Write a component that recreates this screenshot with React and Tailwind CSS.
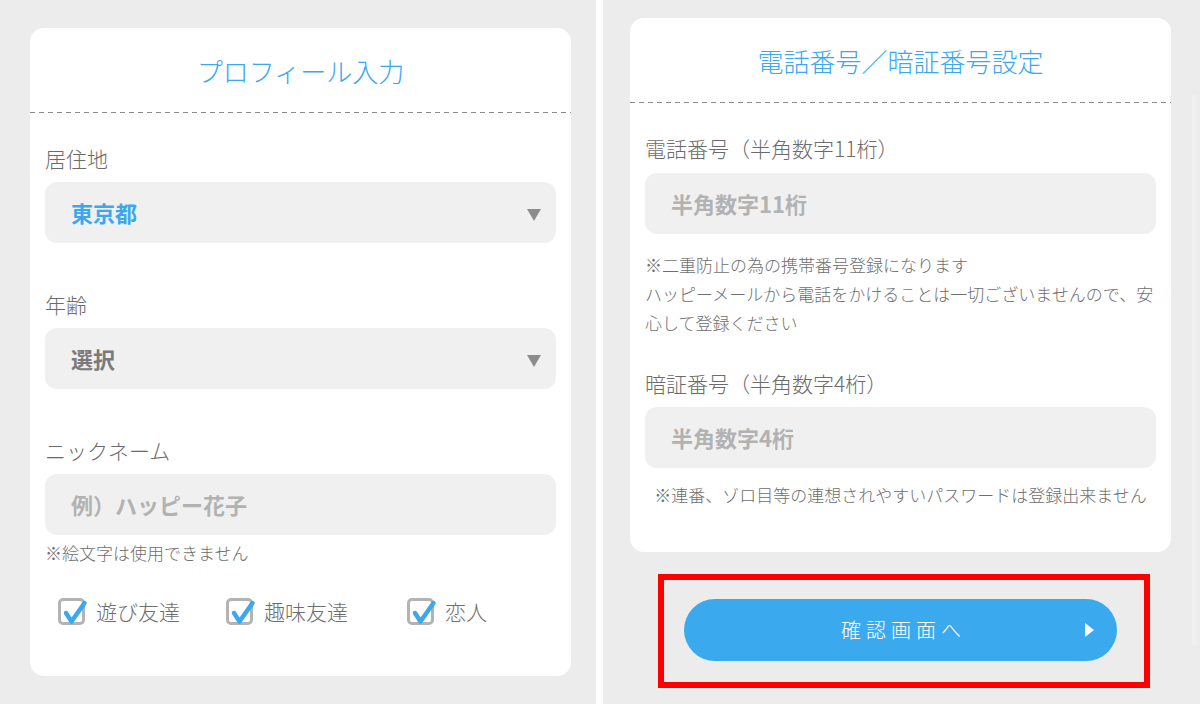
import React from "react";

const font = { fontFamily: '"Noto Sans CJK JP", "Noto Sans", sans-serif' };

function Dashed() {
  return (
    <div className="h-px w-full bg-[repeating-linear-gradient(to_right,#8a8a8a_0_5px,transparent_5px_9px)]" />
  );
}

function Caret() {
  return (
    <svg width="14" height="12" viewBox="0 0 14 12" className="mt-[5px]">
      <polygon points="0,0 14,0 7,12" fill="#8c8c8c" />
    </svg>
  );
}

function Select({ value, blue }) {
  return (
    <div className="flex h-[61px] items-center justify-between rounded-[12px] bg-[#f0f0f0] pl-[26px] pr-[15px]">
      <span className={`text-[22px] font-bold ${blue ? "text-[#3ba8ee]" : "text-[#7a7a7a]"}`}>{value}</span>
      <Caret />
    </div>
  );
}

function Input({ placeholder }) {
  return (
    <div className="flex h-[61px] items-center rounded-[12px] bg-[#f0f0f0] pl-[26px]">
      <span className="text-[22px] font-bold text-[#b2b2b2]">{placeholder}</span>
    </div>
  );
}

function Check({ label, w }) {
  return (
    <div className={`flex items-center ${w}`}>
      <div className="relative h-[27px] w-[27px] rounded-[5px] border-[3px] border-[#b3b3b3] bg-white">
        <svg width="30" height="30" viewBox="0 0 30 30" className="absolute left-[-3px] top-[-3px] overflow-visible">
          <polyline points="8,15 13.5,23.5 26.5,5" fill="none" stroke="#3ba8ee" strokeWidth="4.5" strokeLinecap="round" strokeLinejoin="round" />
        </svg>
      </div>
      <span className="ml-[11px] text-[21px] font-light leading-[30px] text-[#6e6e6e]">{label}</span>
    </div>
  );
}

function Label({ children, mb = "mb-[9px]" }) {
  return <div className={`text-[21px] font-light leading-[30px] text-[#6b6b6b] ${mb}`}>{children}</div>;
}

export default function App() {
  return (
    <div className="flex h-[704px] w-[1200px] overflow-hidden bg-white" style={font}>
      {/* Left panel */}
      <div className="h-full w-[596px] bg-[#ececec] pl-[30px] pt-[28px]">
        <div className="h-[648px] w-[541px] rounded-[14px] bg-white">
          <div className="flex h-[84px] items-center justify-center">
            <h1 className="text-[26px] font-light text-[#3ba8ee]">プロフィール入力</h1>
          </div>
          <Dashed />
          <div className="px-[15px] pt-[30px]">
            <Label>居住地</Label>
            <Select value="東京都" blue />
            <div className="h-[46px]" />
            <Label>年齢</Label>
            <Select value="選択" />
            <div className="h-[46px]" />
            <Label>ニックネーム</Label>
            <Input placeholder="例）ハッピー花子" />
            <div className="mt-[6px] text-[17px] font-light leading-[24px] text-[#6e6e6e]">※絵文字は使用できません</div>
            <div className="mt-[31px] flex pl-[13px]">
              <Check label="遊び友達" w="w-[168px]" />
              <Check label="趣味友達" w="w-[181px]" />
              <Check label="恋人" w="" />
            </div>
          </div>
        </div>
      </div>

      <div className="w-[7px] bg-white" />

      {/* Right panel */}
      <div className="relative h-full flex-1 bg-[#ececec] pl-[27px] pt-[18px]">
        <div className="w-[541px] rounded-[14px] bg-white pb-[43px]">
          <div className="flex h-[84px] items-center justify-center">
            <h1 className="text-[26px] font-light text-[#3ba8ee]">電話番号／暗証番号設定</h1>
          </div>
          <Dashed />
          <div className="px-[15px] pt-[30px]">
            <Label mb="mb-[10px]">電話番号（半角数字11桁）</Label>
            <Input placeholder="半角数字11桁" />
            <div className="mt-[16px] whitespace-nowrap text-[17px] font-light leading-[29px] text-[#6e6e6e]">
              <div>※二重防止の為の携帯番号登録になります</div>
              <div>ハッピーメールから電話をかけることは一切ございませんので、安</div>
              <div>心して登録ください</div>
            </div>
            <div className="h-[31px]" />
            <Label>暗証番号（半角数字4桁）</Label>
            <Input placeholder="半角数字4桁" />
            <div className="mt-[12px] text-center text-[17px] font-light leading-[29px] text-[#6e6e6e]">
              ※連番、ゾロ目等の連想されやすいパスワードは登録出来ません
            </div>
          </div>
        </div>

        <div className="mt-[47px] flex w-[541px] justify-center">
          <div className="relative">
            <button className="flex h-[62px] w-[433px] items-center justify-center rounded-full bg-[#3aa9ee] text-white">
              <span className="pl-[6px] text-[20px] font-light tracking-[5px]">確認画面へ</span>
              <svg width="9" height="14" viewBox="0 0 9 14" className="absolute right-[23px] top-[24px]">
                <polygon points="0,0 9,7 0,14" fill="#ffffff" />
              </svg>
            </button>
            <div className="pointer-events-none absolute bottom-[-27px] left-[-26px] right-[-33px] top-[-25px] border-[6px] border-[#ff0000]" />
          </div>
        </div>

        <div className="absolute right-[3px] top-[95px] h-[550px] w-[5px] bg-[#f0f0f0]" />
      </div>
    </div>
  );
}
